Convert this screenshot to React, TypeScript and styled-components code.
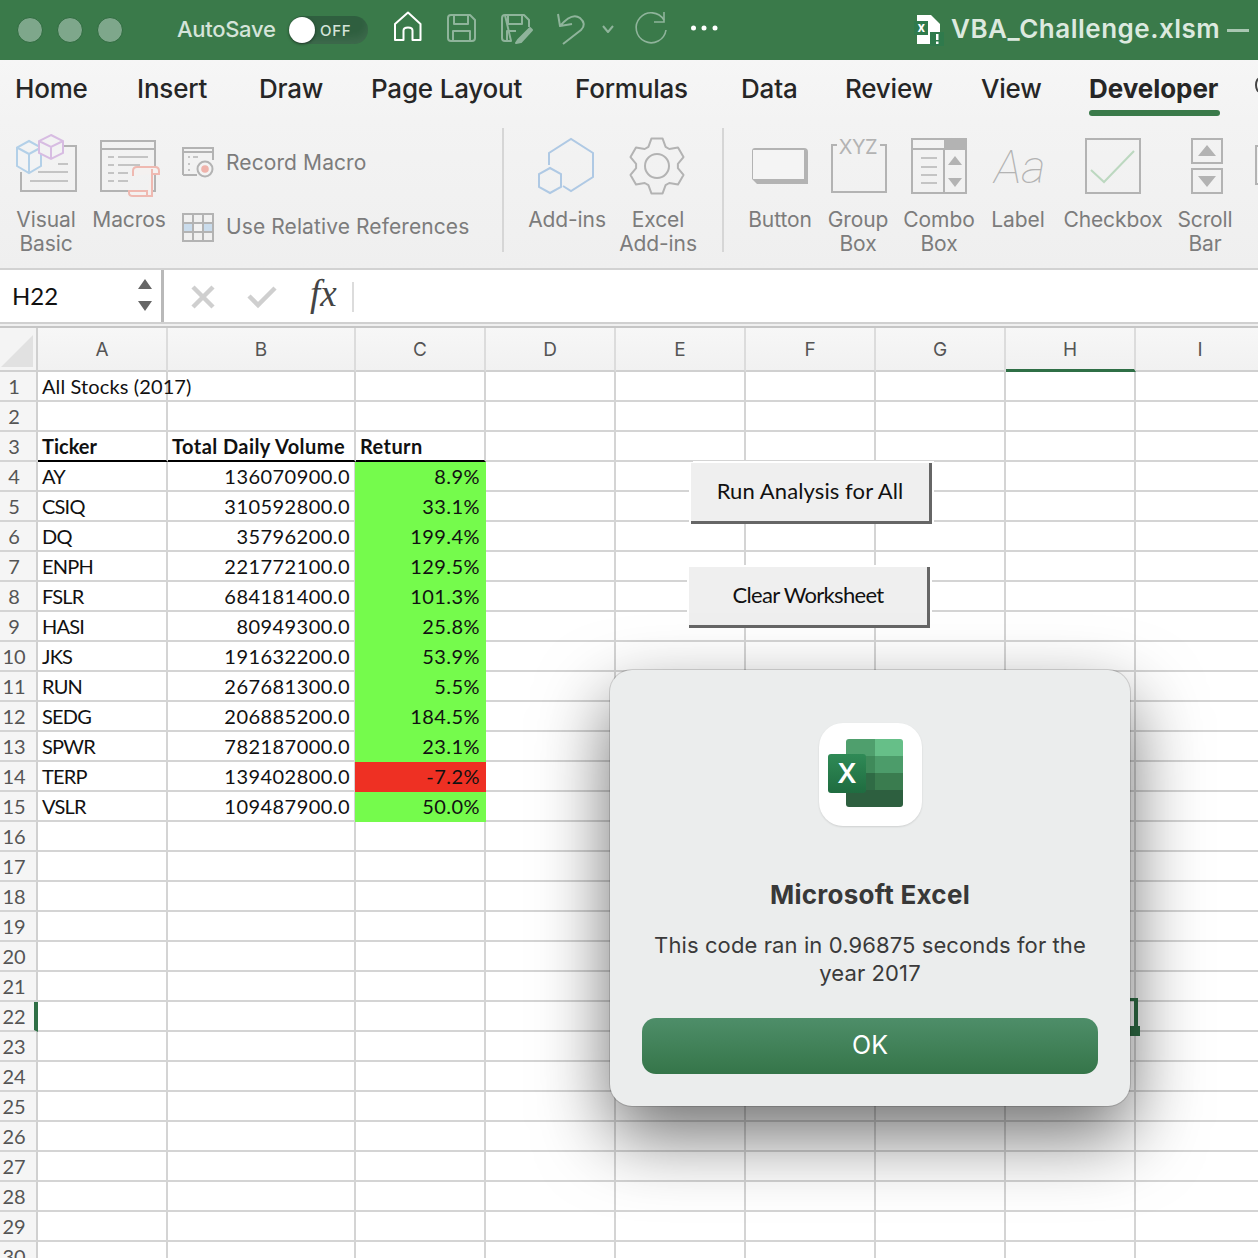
import React from "react";
import styled, { createGlobalStyle } from "styled-components";

const UI = `Inter, "Liberation Sans", sans-serif`;
const CELL = `Lato, "Open Sans", sans-serif`;
const GRAY = "#b3b3b3";

const Global = createGlobalStyle`
  html, body { margin: 0; padding: 0; background: #fff; }
  body { width: 1258px; height: 1258px; overflow: hidden; font-family: ${UI}; }
`;

const Page = styled.div`
  position: relative;
  width: 1258px;
  height: 1258px;
  overflow: hidden;
  display: flex;
  flex-direction: column;
`;

/* Title bar */
const TitleBar = styled.header`
  height: 60px;
  flex: none;
  background: #3a7a4a;
  display: flex;
  align-items: center;
  padding-left: 17px;
`;
const Lights = styled.div`
  display: flex;
  gap: 14px;
  margin-right: 54px;
`;
const Light = styled.span`
  width: 26px;
  height: 26px;
  box-sizing: border-box;
  border-radius: 50%;
  background: #7ea78b;
  border: 1.5px solid #2f6b3f;
`;
const AutoSave = styled.span`
  font-size: 22px;
  font-weight: 500;
  color: #d5e4d9;
  width: 112px;
  padding-bottom: 3px;
  letter-spacing: -0.3px;
`;
const Toggle = styled.div`
  width: 79px;
  height: 28px;
  margin-right: 21px;
  border-radius: 14px;
  background: #2f5f3f;
  display: flex;
  align-items: center;
  box-shadow: inset 0 -6px 8px rgba(255, 255, 255, 0.07);
`;
const Knob = styled.span`
  width: 26px;
  height: 26px;
  border-radius: 50%;
  background: #fff;
  margin-right: 5px;
  box-shadow: 0 1px 3px rgba(0, 0, 0, 0.5);
`;
const ToggleText = styled.span`
  font-size: 15px;
  font-weight: 500;
  letter-spacing: 0.7px;
  color: #d5e4d9;
`;
const TitleIcons = styled.svg`
  display: block;
  flex: none;
`;
const FileSvg = styled.svg`
  display: block;
  flex: none;
  margin-right: 5px;
`;
const FileName = styled.span`
  font-size: 26px;
  font-weight: 600;
  color: #dce9df;
  white-space: nowrap;
  padding-bottom: 4px;
  letter-spacing: 0.5px;
`;
const Dash = styled.span`
  width: 22px;
  height: 3px;
  margin-left: 7px;
  background: #a9c7b2;
  flex: none;
`;

/* Tabs */
const TabBar = styled.nav`
  height: 60px;
  flex: none;
  box-sizing: border-box;
  padding-left: 15px;
  display: flex;
  background: linear-gradient(#f6f6f6, #f3f3f3);
`;
const Tab = styled.div<{ $w: number; $active?: boolean }>`
  position: relative;
  flex: none;
  width: ${(p) => p.$w}px;
  font-size: 26px;
  line-height: 58px;
  font-weight: ${(p) => (p.$active ? 700 : 500)};
  color: #262626;
  white-space: nowrap;
  letter-spacing: ${(p) => (p.$active ? "-0.05px" : "-0.2px")};
`;
const TabUnderline = styled.span`
  position: absolute;
  left: 0;
  top: 50px;
  width: 131px;
  height: 6px;
  border-radius: 3px;
  background: #3a7a4a;
`;
const SearchStub = styled.span`
  flex: none;
  width: 10px;
  height: 16px;
  margin-top: 17px;
  margin-left: 35px;
  box-sizing: border-box;
  border: 2px solid #444;
  border-radius: 50%;
`;

/* Ribbon */
const Ribbon = styled.section`
  height: 148px;
  flex: none;
  box-sizing: border-box;
  padding: 8px 0 0 8px;
  background: linear-gradient(#f3f3f3, #efefef);
  display: flex;
  align-items: flex-start;
  overflow: hidden;
`;
const Item = styled.div<{ $w: number; $ml?: number }>`
  flex: none;
  width: ${(p) => p.$w}px;
  margin-left: ${(p) => p.$ml ?? 0}px;
  display: flex;
  flex-direction: column;
  align-items: center;
`;
const ItemLabel = styled.div`
  margin-top: 1px;
  font-size: 21px;
  line-height: 24px;
  color: #7c7c7c;
  text-align: center;
  white-space: nowrap;
  letter-spacing: -0.1px;
`;
const IconSvg = styled.svg`
  display: block;
  flex: none;
`;
const Stack = styled.div`
  flex: none;
  width: 328px;
  box-sizing: border-box;
  padding: 18px 0 0 8px;
  display: flex;
  flex-direction: column;
  gap: 31px;
`;
const StackRow = styled.div`
  display: flex;
  align-items: center;
  gap: 12px;
  height: 33px;
`;
const StackLabel = styled(ItemLabel)`
  letter-spacing: 0.1px;
`;
const Divider = styled.span<{ $ml?: number }>`
  flex: none;
  width: 2px;
  height: 124px;
  margin-left: ${(p) => p.$ml ?? 0}px;
  background: #d6d6d6;
`;

/* Formula bar */
const FormulaBar = styled.div`
  height: 60px;
  flex: none;
  box-sizing: border-box;
  background: #f0f0f0;
  border-top: 2px solid #d2d2d2;
  border-bottom: 2px solid #c6c6c6;
`;
const FormulaInner = styled.div`
  height: 54px;
  box-sizing: border-box;
  background: #fff;
  border-bottom: 2px solid #d0d0d0;
  display: flex;
  align-items: stretch;
`;
const NameBox = styled.div`
  flex: none;
  width: 164px;
  box-sizing: border-box;
  border-right: 3px solid #b9b9b9;
  padding: 0 9px 2px 12px;
  display: flex;
  align-items: center;
  justify-content: space-between;
  font-family: ${CELL};
  font-size: 24px;
  color: #111;
`;
const Spinner = styled.svg`
  display: block;
`;
const FormulaTools = styled.svg`
  display: block;
  flex: none;
`;
const FxLabel = styled.text`
  font-family: "Liberation Serif", serif;
  font-style: italic;
  font-size: 37px;
  fill: #444;
`;

/* Sheet */
const Sheet = styled.div`
  flex: none;
  display: grid;
  grid-template-columns: 38px 130px 188px repeat(7, 130px);
  grid-template-rows: 44px;
  grid-auto-rows: 30px;
  background: #fff;
  font-family: ${CELL};
  font-size: 20px;
  color: #111;
`;
const ColHead = styled.div<{ $sel?: boolean }>`
  box-sizing: border-box;
  background: linear-gradient(#f7f7f7, #f1f1f1);
  border-right: 2px solid #dcdcdc;
  border-bottom: ${(p) => (p.$sel ? "3px solid #2f6f46" : "2px solid #d0d0d0")};
  display: flex;
  align-items: center;
  justify-content: center;
  color: #555;
  padding-top: 1px;
  font-family: ${UI};
  font-size: 19px;
  font-weight: 400;
`;
const Corner = styled.div`
  box-sizing: border-box;
  background: #f4f4f4;
  border-right: 2px solid #d0d0d0;
  border-bottom: 2px solid #d0d0d0;
  padding: 7px 3px 3px 1px;
`;
const CornerTri = styled.div`
  width: 100%;
  height: 100%;
  background: #e1e1e1;
  clip-path: polygon(100% 0, 100% 100%, 0 100%);
`;
const RowHead = styled.div<{ $sel?: boolean }>`
  box-sizing: border-box;
  background: #f5f5f5;
  border-right: ${(p) => (p.$sel ? "4px solid #2f6f46" : "2px solid #d0d0d0")};
  border-bottom: 2px solid #d4d4d4;
  padding-right: ${(p) => (p.$sel ? 6 : 8)}px;
  text-align: center;
  color: #555;
  line-height: 28px;
  font-size: 20px;
`;
const Cell = styled.div<{ $right?: boolean; $bold?: boolean; $under?: boolean; $fill?: string; $track?: number }>`
  box-sizing: border-box;
  padding: 0 4px;
  line-height: 28px;
  white-space: nowrap;
  text-align: ${(p) => (p.$right ? "right" : "left")};
  font-weight: ${(p) => (p.$bold ? 700 : 400)};
  letter-spacing: ${(p) => p.$track ?? 0}px;
  background: ${(p) => p.$fill ?? "transparent"};
  box-shadow: ${(p) => (p.$fill ? `-1px 0 0 ${p.$fill}` : "none")};
  border-right: 2px solid ${(p) => p.$fill ?? "#d4d4d4"};
  border-bottom: 2px solid ${(p) => (p.$under ? "#000" : p.$fill ?? "#d4d4d4")};
`;

/* Over the sheet */
const MacroButton = styled.div<{ $x: number; $y: number; $track: number }>`
  position: absolute;
  left: ${(p) => p.$x}px;
  top: ${(p) => p.$y}px;
  width: 241px;
  height: 61px;
  box-sizing: border-box;
  padding-bottom: 4px;
  background: #efefef;
  border-right: 3px solid #666;
  border-bottom: 3px solid #666;
  box-shadow: -2px 0 0 #fff, 2px -2px 0 #fff;
  display: flex;
  align-items: center;
  justify-content: center;
  font-family: ${CELL};
  font-size: 22px;
  letter-spacing: ${(p) => p.$track}px;
  color: #111;
`;
const SelectionEdge = styled.div`
  position: absolute;
  left: 1128px;
  top: 998px;
  width: 10px;
  height: 28px;
  box-sizing: border-box;
  border-top: 3px solid #2f6f46;
  border-right: 4px solid #2f6f46;
`;
const SelectionHandle = styled.div`
  position: absolute;
  left: 1130px;
  top: 1026px;
  width: 10px;
  height: 10px;
  background: #2f6f46;
`;

/* Alert */
const Modal = styled.div`
  position: absolute;
  left: 610px;
  top: 670px;
  width: 520px;
  height: 436px;
  box-sizing: border-box;
  padding: 53px 32px 0;
  border-radius: 22px;
  background: #ebeded;
  box-shadow: 0 0 0 1px rgba(0, 0, 0, 0.14), 0 30px 72px rgba(0, 0, 0, 0.56);
  display: flex;
  flex-direction: column;
  align-items: center;
`;
const AppTile = styled.div`
  width: 103px;
  height: 103px;
  border-radius: 24px;
  background: #fff;
  box-shadow: 0 1px 2px rgba(0, 0, 0, 0.12);
  flex: none;
`;
const ModalTitle = styled.h2`
  margin: 53px 0 0;
  font-size: 26px;
  line-height: 32px;
  font-weight: 700;
  color: #383838;
  letter-spacing: 0.25px;
`;
const ModalText = styled.p`
  margin: 20px 0 0;
  width: 456px;
  font-size: 22px;
  line-height: 28px;
  text-align: center;
  color: #3a3a3a;
  letter-spacing: 0.1px;
`;
const OkButton = styled.div`
  margin-top: 31px;
  width: 456px;
  height: 56px;
  flex: none;
  border-radius: 14px;
  background: linear-gradient(#4e8e69, #357549);
  color: #fff;
  font-size: 25px;
  line-height: 54px;
  text-align: center;
`;

const SvgText = styled.text`
  font-family: ${UI};
`;

const rows: [string, string, string, boolean?][] = [
  ["AY", "136070900.0", "8.9%"],
  ["CSIQ", "310592800.0", "33.1%"],
  ["DQ", "35796200.0", "199.4%"],
  ["ENPH", "221772100.0", "129.5%"],
  ["FSLR", "684181400.0", "101.3%"],
  ["HASI", "80949300.0", "25.8%"],
  ["JKS", "191632200.0", "53.9%"],
  ["RUN", "267681300.0", "5.5%"],
  ["SEDG", "206885200.0", "184.5%"],
  ["SPWR", "782187000.0", "23.1%"],
  ["TERP", "139402800.0", "-7.2%", true],
  ["VSLR", "109487900.0", "50.0%"],
];
const GREEN = "#75fb4c";
const RED = "#ee3023";
const COLS = ["A", "B", "C", "D", "E", "F", "G", "H", "I"];

function gearPoints(cx: number, cy: number) {
  const pts: string[] = [];
  for (let i = 0; i < 6; i++) {
    const a = (Math.PI / 3) * i - Math.PI / 6;
    const at = (r: number, d: number) =>
      `${(cx + r * Math.cos(a + d)).toFixed(1)},${(cy + r * Math.sin(a + d)).toFixed(1)}`;
    pts.push(at(21, -0.42), at(28, -0.2), at(28, 0.2), at(21, 0.42));
  }
  return pts.join(" ");
}

const Icon: React.FC<{ cx: number; w: number; children: React.ReactNode }> = ({ cx, w, children }) => (
  <IconSvg width={w} height={79} viewBox={`${cx - w / 2} 128 ${w} 79`} fill="none" stroke={GRAY} strokeWidth={2}>
    {children}
  </IconSvg>
);

const Dashes: React.FC<{ lines: number[][] }> = ({ lines }) => (
  <>
    {lines.map(([x1, x2, y], i) => (
      <line key={i} x1={x1} x2={x2} y1={y} y2={y} stroke="#c4c4c4" />
    ))}
  </>
);

const TopIcons = () => (
  <TitleIcons width={525} height={60} viewBox="389 0 525 60" fill="none">
    <path d="M395 40V24L408 12.5 420.5 24V40H412.5V30.5Q412.5 27.5 408 27.5T403.5 30.5V40Z" stroke="#fff" strokeWidth={2} strokeLinejoin="round" />
    <g stroke="#8fb49b" strokeWidth={2} strokeLinejoin="round">
      <path d="M451 15H470L475 20V38Q475 41 472 41H451Q448 41 448 38V18Q448 15 451 15Z" />
      <path d="M454 15V24H468V15M453 41V31H470V41" />
      <path d="M505 15H524L529 20V27M511 41H505Q502 41 502 38V18Q502 15 505 15Z" />
      <path d="M508 15V24H522V15M507 41V31H516" />
      <path d="M518 40L530 28L532 30L521 42L516 43Z" fill="#8fb49b" />
      <path d="M558 14L560 26L572 24M560 26Q572 12 580 18Q587 24 581 30L563 44" />
      <path d="M603 26L608 32L613 26" />
    </g>
    <g stroke="#8fb49b" strokeWidth={1.6}>
      <path d="M664 20A15 15 0 1 0 666 30" />
      <path d="M664 12V22H654" />
    </g>
    <g fill="#fff">
      <circle cx={693.5} cy={28} r={2.5} />
      <circle cx={704} cy={28} r={2.5} />
      <circle cx={715} cy={28} r={2.5} />
    </g>
  </TitleIcons>
);

const FileIcon = () => (
  <FileSvg width={32} height={32} viewBox="0 0 32 32">
    <path d="M3 1H17L26 10V30H3Z" fill="#fff" />
    <rect x="0" y="7" width="14" height="14" fill="#2f7a4c" />
    <SvgText x="3.5" y="18" fontSize="13" fontWeight="700" fill="#fff">x</SvgText>
    <rect x="16" y="18" width="14" height="14" fill="#2f7a4c" />
    <rect x="22" y="20" width="2.5" height="6" fill="#fff" />
    <rect x="22" y="27.5" width="2.5" height="2.5" fill="#fff" />
  </FileSvg>
);

export default function App() {
  return (
    <Page>
      <Global />
      <TitleBar>
        <Lights>
          <Light />
          <Light />
          <Light />
        </Lights>
        <AutoSave>AutoSave</AutoSave>
        <Toggle>
          <Knob />
          <ToggleText>OFF</ToggleText>
        </Toggle>
        <TopIcons />
        <FileIcon />
        <FileName>VBA_Challenge.xlsm</FileName>
        <Dash />
      </TitleBar>

      <TabBar>
        <Tab $w={122}>Home</Tab>
        <Tab $w={122}>Insert</Tab>
        <Tab $w={112}>Draw</Tab>
        <Tab $w={204}>Page Layout</Tab>
        <Tab $w={166}>Formulas</Tab>
        <Tab $w={104}>Data</Tab>
        <Tab $w={136}>Review</Tab>
        <Tab $w={108}>View</Tab>
        <Tab $w={131} $active>
          Developer
          <TabUnderline />
        </Tab>
        <SearchStub />
      </TabBar>

      <Ribbon>
        <Item $w={76}>
          <Icon cx={46} w={76}>
            <path d="M62 146H76V191H21V172" />
            <Dashes lines={[[58, 68, 164], [38, 66, 172], [52, 68, 172], [30, 68, 181]]} />
            <path d="M29 141L41 147.5V166L29 173L17 166V147.5ZM17 147.5L29 154L41 147.5M29 154V173" stroke="#b3d0e8" fill="#f2f3f4" />
            <path d="M51 135L63 141V153L51 159L39 153V141ZM39 141L51 147L63 141M51 147V159" stroke="#d7bce2" fill="#f2f2f3" />
          </Icon>
          <ItemLabel>
            Visual
            <br />
            Basic
          </ItemLabel>
        </Item>
        <Item $w={90}>
          <Icon cx={129} w={90}>
            <rect x="101" y="141" width="54" height="50" />
            <line x1="101" x2="155" y1="149" y2="149" />
            <Dashes lines={[[108, 114, 157], [118, 148, 157], [108, 114, 165], [118, 140, 165], [108, 114, 173], [118, 128, 173], [108, 114, 181], [118, 128, 181]]} />
            <path d="M133 176V171Q133 167 137 167H155Q159 167 159 171V174H152M152 169V196H133Q129 196 129 193V191H147V196" stroke="#efb9b1" fill="#f4f1f0" />
          </Icon>
          <ItemLabel>Macros</ItemLabel>
        </Item>
        <Stack>
          <StackRow>
            <IconSvg width={32} height={33} viewBox="182 146 32 33" fill="none" stroke={GRAY} strokeWidth={2}>
              <path d="M183 175V148H213V160M183 152H213M183 175H197" />
              <Dashes lines={[[188, 190, 157], [193, 198, 157], [188, 190, 164], [188, 190, 170]]} />
              <circle cx="205" cy="169" r="7.5" fill="#f3f3f3" />
              <circle cx="205" cy="169" r="3.8" fill="#efb3ab" stroke="none" />
            </IconSvg>
            <StackLabel>Record Macro</StackLabel>
          </StackRow>
          <StackRow>
            <IconSvg width={32} height={30} viewBox="182 211 32 30" fill="none" stroke={GRAY} strokeWidth={2}>
              <rect x="183" y="222" width="30" height="10" fill="#cadcec" stroke="none" />
              <rect x="193" y="222" width="10" height="10" fill="#f2f2f2" stroke="none" />
              <rect x="183" y="213" width="30" height="27" />
              <path d="M193 213V240M203 213V240M183 222H213M183 231H213" />
            </IconSvg>
            <StackLabel>Use Relative References</StackLabel>
          </StackRow>
        </Stack>
        <Divider />
        <Item $w={86} $ml={20}>
          <Icon cx={567} w={86}>
            <path d="M549 165V153L571 139L593 153V177L571 191L563 186" stroke="#afc9e4" />
            <path d="M550 168L561 174V187L550 193L539 187V174Z" stroke="#afc9e4" />
          </Icon>
          <ItemLabel>Add-ins</ItemLabel>
        </Item>
        <Item $w={96}>
          <Icon cx={658} w={96}>
            <polygon points={gearPoints(657, 166)} strokeLinejoin="round" />
            <circle cx="657" cy="166" r="12" />
          </Icon>
          <ItemLabel>
            Excel
            <br />
            Add-ins
          </ItemLabel>
        </Item>
        <Divider $ml={16} />
        <Item $w={76} $ml={18}>
          <Icon cx={780} w={76}>
            <path d="M755 148H804Q808 148 808 152V184H757L752 179V151Q752 148 755 148Z" fill={GRAY} stroke="none" />
            <rect x="753" y="150" width="51" height="29" fill="#f4f4f4" stroke="none" />
          </Icon>
          <ItemLabel>Button</ItemLabel>
        </Item>
        <Item $w={80}>
          <Icon cx={858} w={80}>
            <path d="M837 145H832V192H886V145H880" />
            <SvgText x="858" y="154" textAnchor="middle" fontSize="20" fill={GRAY} stroke="none" letterSpacing="-0.5">XYZ</SvgText>
          </Icon>
          <ItemLabel>
            Group
            <br />
            Box
          </ItemLabel>
        </Item>
        <Item $w={82}>
          <Icon cx={939} w={82}>
            <rect x="944" y="138" width="23" height="12" fill={GRAY} stroke="none" />
            <rect x="912" y="139" width="54" height="54" />
            <path d="M912 149H966M944 149V193" />
            <Dashes lines={[[921, 937, 158], [921, 937, 167], [921, 937, 175], [921, 937, 183]]} />
            <path d="M955 156L962 165H948ZM948 178H962L955 187Z" fill={GRAY} stroke="none" />
          </Icon>
          <ItemLabel>
            Combo
            <br />
            Box
          </ItemLabel>
        </Item>
        <Item $w={76}>
          <Icon cx={1018} w={76}>
            <text x="1020" y="183" textAnchor="middle" fontFamily="Roboto, sans-serif" fontStyle="italic" fontWeight={100} fontSize="47" fill={GRAY} stroke="none">Aa</text>
          </Icon>
          <ItemLabel>Label</ItemLabel>
        </Item>
        <Item $w={114}>
          <Icon cx={1113} w={114}>
            <rect x="1086" y="139" width="54" height="54" />
            <path d="M1091 170L1104 182L1134 151" stroke="#bcd8c0" />
          </Icon>
          <ItemLabel>Checkbox</ItemLabel>
        </Item>
        <Item $w={70}>
          <Icon cx={1205} w={70}>
            <rect x="1192" y="139" width="30" height="24" />
            <rect x="1192" y="169" width="30" height="24" />
            <path d="M1207 145L1216 156H1198ZM1198 176H1216L1207 187Z" fill={GRAY} stroke="none" />
          </Icon>
          <ItemLabel>
            Scroll
            <br />
            Bar
          </ItemLabel>
        </Item>
        <Item $w={20}>
          <IconSvg width={20} height={79} viewBox="1240 128 20 79" fill="none" stroke={GRAY} strokeWidth={2}>
            <rect x="1256" y="146" width="20" height="38" />
          </IconSvg>
        </Item>
      </Ribbon>

      <FormulaBar>
        <FormulaInner>
          <NameBox>
            H22
            <Spinner width={14} height={32} viewBox="0 0 14 32">
              <path d="M7 0L14 10H0ZM0 22H14L7 32Z" fill="#666" />
            </Spinner>
          </NameBox>
          <FormulaTools width={200} height={52} viewBox="164 270 200 52" fill="none">
            <path d="M193 287L213 307M213 287L193 307" stroke="#cfcfcf" strokeWidth={4.5} />
            <path d="M249 296L258 305L275 288" stroke="#cfcfcf" strokeWidth={4.5} />
            <FxLabel x="310" y="306">fx</FxLabel>
            <line x1="353" x2="353" y1="282" y2="312" stroke="#dcdcdc" strokeWidth={2} />
          </FormulaTools>
        </FormulaInner>
      </FormulaBar>

      <Sheet>
        <Corner>
          <CornerTri />
        </Corner>
        {COLS.map((c) => (
          <ColHead key={c} $sel={c === "H"}>
            {c}
          </ColHead>
        ))}
        {Array.from({ length: 30 }, (_, i) => {
          const n = i + 1;
          const data = n >= 4 && n <= 15 ? rows[n - 4] : null;
          return (
            <React.Fragment key={n}>
              <RowHead $sel={n === 22}>{n}</RowHead>
              {n === 1 ? (
                <Cell $track={0.12}>All Stocks (2017)</Cell>
              ) : n === 3 ? (
                <Cell $bold $under>Ticker</Cell>
              ) : data ? (
                <Cell $track={-0.8}>{data[0]}</Cell>
              ) : (
                <Cell />
              )}
              {n === 3 ? (
                <Cell $bold $under $track={0.44}>Total Daily Volume</Cell>
              ) : data ? (
                <Cell $right $track={0.45}>{data[1]}</Cell>
              ) : (
                <Cell />
              )}
              {n === 3 ? (
                <Cell $bold $under $track={0.4}>Return</Cell>
              ) : data ? (
                <Cell $right $track={0.45} $fill={data[3] ? RED : GREEN}>{data[2]}</Cell>
              ) : (
                <Cell />
              )}
              {COLS.slice(3).map((c) => (
                <Cell key={c} />
              ))}
            </React.Fragment>
          );
        })}
      </Sheet>

      <MacroButton $x={691} $y={463} $track={0.1}>Run Analysis for All</MacroButton>
      <MacroButton $x={689} $y={567} $track={-0.7}>Clear Worksheet</MacroButton>
      <SelectionEdge />
      <SelectionHandle />

      <Modal>
        <AppTile>
          <IconSvg width={103} height={103} viewBox="819 723 103 103">
            <defs>
              <linearGradient id="xTile" x1="0" y1="0" x2="0" y2="1">
                <stop offset="0" stopColor="#2f8a56" />
                <stop offset="1" stopColor="#1f6c40" />
              </linearGradient>
            </defs>
            <path d="M849 739H875V773H846V742Q846 739 849 739Z" fill="#4f9f6d" />
            <path d="M875 739H900Q903 739 903 742V756H875Z" fill="#66bf88" />
            <rect x="875" y="756" width="28" height="17" fill="#4c9c6a" />
            <rect x="846" y="756" width="29" height="17" fill="#3f8a5a" />
            <rect x="846" y="773" width="29" height="17" fill="#2f6b45" />
            <rect x="875" y="773" width="28" height="17" fill="#3a7c4f" />
            <path d="M846 790H903V804Q903 807 900 807H849Q846 807 846 804Z" fill="#2d5f3f" />
            <rect x="828" y="754" width="38" height="39" rx="3" fill="url(#xTile)" />
            <SvgText x="847" y="783" textAnchor="middle" fontSize="27" fontWeight="600" fill="#fff">X</SvgText>
          </IconSvg>
        </AppTile>
        <ModalTitle>Microsoft Excel</ModalTitle>
        <ModalText>This code ran in 0.96875 seconds for the year 2017</ModalText>
        <OkButton>OK</OkButton>
      </Modal>
    </Page>
  );
}
